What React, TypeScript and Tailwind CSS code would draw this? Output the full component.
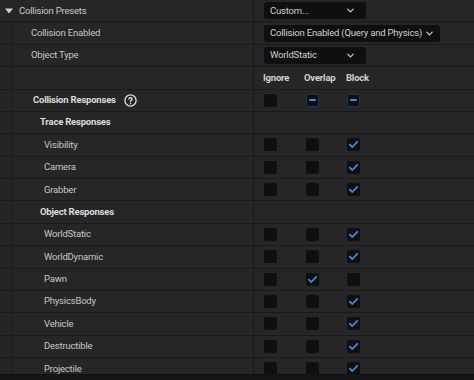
import { ChevronDown } from "lucide-react";

type Row = {
  label: string;
  kind: "item" | "group";
  checks: [number, number, number]; // 0 off, 1 on, 2 mixed
};

const rows: Row[] = [
  { label: "Trace Responses", kind: "group", checks: [0, 0, 0] },
  { label: "Visibility", kind: "item", checks: [0, 0, 1] },
  { label: "Camera", kind: "item", checks: [0, 0, 1] },
  { label: "Grabber", kind: "item", checks: [0, 0, 1] },
  { label: "Object Responses", kind: "group", checks: [0, 0, 0] },
  { label: "WorldStatic", kind: "item", checks: [0, 0, 1] },
  { label: "WorldDynamic", kind: "item", checks: [0, 0, 1] },
  { label: "Pawn", kind: "item", checks: [0, 1, 0] },
  { label: "PhysicsBody", kind: "item", checks: [0, 0, 1] },
  { label: "Vehicle", kind: "item", checks: [0, 0, 1] },
  { label: "Destructible", kind: "item", checks: [0, 0, 1] },
  { label: "Projectile", kind: "item", checks: [0, 0, 1] },
];

function Box({ state }: { state: number }) {
  return (
    <div
      className={`w-[13px] h-[13px] rounded-[2px] bg-[#0f0f0f] flex items-center justify-center ${
        state === 2 ? "border border-[#1d3550]" : ""
      }`}
    >
      {state === 1 && (
        <svg width="11" height="11" viewBox="0 0 11 11" fill="none">
          <path d="M1.8 5.6 L4.3 8 L9.3 2.8" stroke="#3a8de0" strokeWidth="1.8" strokeLinecap="round" strokeLinejoin="round" />
        </svg>
      )}
      {state === 2 && <div className="w-[7px] h-[2px] rounded-[1px] bg-[#3a8de0]" />}
    </div>
  );
}

function Checks({ checks }: { checks: [number, number, number] }) {
  return (
    <div className="flex items-center pl-[10px]">
      <div className="w-[42px]">
        <Box state={checks[0]} />
      </div>
      <div className="w-[41px]">
        <Box state={checks[1]} />
      </div>
      <div className="w-[41px]">
        <Box state={checks[2]} />
      </div>
    </div>
  );
}

function Dropdown({ text, width, chevron }: { text: string; width: string; chevron?: string }) {
  return (
    <div className={`ml-[10px] h-[17px] ${width} rounded-[3px] bg-[#0f0f0f] flex items-center pl-[6px] pr-[7px]`}>
      <span className="text-[#cfcfcf] flex-1 whitespace-nowrap">{text}</span>
      <ChevronDown className={`w-[11px] h-[11px] shrink-0 text-[#d0d0d0] ${chevron ?? ""}`} strokeWidth={2.5} />
    </div>
  );
}

function Line({ name, value, bold, indent }: { name: React.ReactNode; value?: React.ReactNode; bold?: boolean; indent?: string }) {
  return (
    <div className="flex h-[22.375px] shrink-0 border-b border-[#1a1a1a]">
      <div className="w-[13px] border-r border-[#1a1a1a] bg-[#252525]" />
      <div
        className={`w-[241px] border-r border-[#1a1a1a] flex items-center ${indent ?? "pl-[18px]"} ${
          bold ? "font-bold text-[#dcdcdc]" : "text-[#c6c6c6]"
        }`}
      >
        {name}
      </div>
      <div className="flex-1 flex items-center">{value}</div>
    </div>
  );
}

export default function App() {
  return (
    <div
      className="w-[474px] h-[380px] bg-[#262626] flex flex-col overflow-hidden text-[9.5px] tracking-[-0.2px]"
      style={{ fontFamily: "Roboto, 'Noto Sans', sans-serif" }}
    >
      <div className="flex-1 flex flex-col overflow-hidden">
        <div className="flex h-[22.375px] shrink-0 border-b border-[#1a1a1a]">
          <div className="w-[254px] border-r border-[#1a1a1a] flex items-center pl-[5px] gap-[6px] text-[#cacaca]">
            <svg width="8" height="6" viewBox="0 0 8 6">
              <path d="M0 0.5 H8 L4 5.5 Z" fill="#d0d0d0" />
            </svg>
            <span>Collision Presets</span>
          </div>
          <div className="flex-1 flex items-center">
            <Dropdown text="Custom..." width="w-[102px]" chevron="mr-[3px]" />
          </div>
        </div>
        <Line name="Collision Enabled" value={<Dropdown text="Collision Enabled (Query and Physics)" width="w-[176px]" chevron="ml-[2px]" />} />
        <Line name="Object Type" value={<Dropdown text="WorldStatic" width="w-[102px]" chevron="mr-[3px]" />} />
        <Line
          name=""
          value={
            <div className="flex items-center pl-[9px] font-bold text-[#d2d2d2]">
              <div className="w-[41px]">Ignore</div>
              <div className="w-[42px]">Overlap</div>
              <div className="w-[41px]">Block</div>
            </div>
          }
        />
        <Line
          bold
          name={
            <div className="flex items-center gap-[8px]">
              <span>Collision Responses</span>
              <svg width="13" height="13" viewBox="0 0 13 13" fill="none">
                <circle cx="6.5" cy="6.5" r="5.6" stroke="#e0e0e0" strokeWidth="1.3" />
                <path d="M4.9 5.1 C4.9 3.3 8.1 3.3 8.1 5.1 C8.1 6.3 6.5 6.3 6.5 7.6" stroke="#e0e0e0" strokeWidth="1.3" strokeLinecap="round" />
                <circle cx="6.5" cy="9.6" r="0.8" fill="#e0e0e0" />
              </svg>
            </div>
          }
          indent="pl-[20px]"
          value={<Checks checks={[0, 2, 2]} />}
        />
        {rows.map((r) => (
          <Line
            key={r.label}
            name={r.label}
            bold={r.kind === "group"}
            indent={r.kind === "group" ? "pl-[27px]" : "pl-[31px]"}
            value={r.kind === "item" ? <Checks checks={r.checks} /> : undefined}
          />
        ))}
      </div>
      <div className="h-[6px] shrink-0 bg-[#151515] border-t border-[#101010]" />
    </div>
  );
}
